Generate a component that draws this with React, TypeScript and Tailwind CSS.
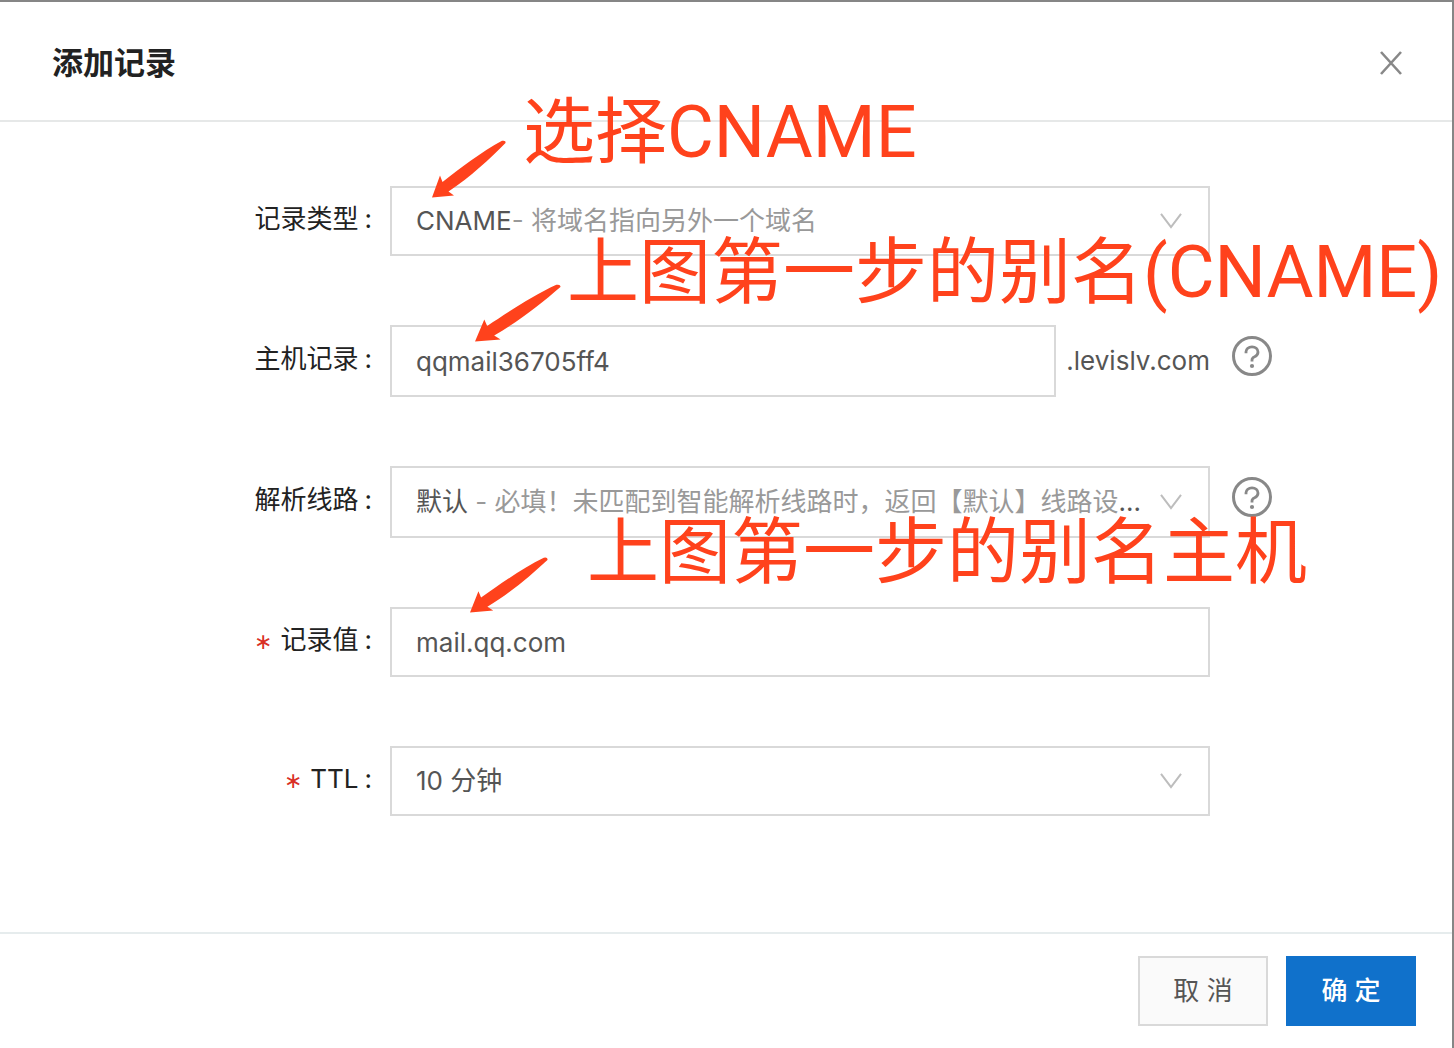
import type { ReactNode } from "react";
import { useState } from "react";

type SelectOption = { value: string; name: string; detail?: string; clipped?: boolean };

function Chevron() {
  return (
    <svg
      className="pointer-events-none h-4 w-6 shrink-0"
      viewBox="0 0 24 16"
      fill="none"
      stroke="#bdbdbd"
      strokeWidth="2"
      aria-hidden="true"
    >
      <path d="M2 0.8 12 14.2 22 0.8" />
    </svg>
  );
}

function SelectBox({ id, options }: { id: string; options: SelectOption[] }) {
  const [value, setValue] = useState(options[0].value);
  const current = options.find((o) => o.value === value) ?? options[0];
  return (
    <div className="relative flex h-full w-full items-center justify-between border-2 border-[#d9d9d9] bg-white pr-[25px] pl-6">
      <div className="overflow-hidden whitespace-nowrap text-[#555555]" aria-hidden="true">
        {current.name}
        {current.detail && <span className="text-[#999999]">{current.detail}</span>}
        {current.clipped && "..."}
      </div>
      <Chevron />
      <select
        id={id}
        value={value}
        onChange={(e) => setValue(e.target.value)}
        className="absolute inset-0 h-full w-full cursor-pointer opacity-0"
      >
        {options.map((o) => (
          <option key={o.value} value={o.value}>
            {o.name}
          </option>
        ))}
      </select>
    </div>
  );
}

function HelpButton() {
  return (
    <button type="button" aria-label="帮助" className="mb-[10px] ml-[22px] size-10 cursor-pointer">
      <svg viewBox="0 0 40 40" fill="none" stroke="#888888" aria-hidden="true">
        <circle cx="20" cy="20" r="18.5" strokeWidth="3" />
        <path
          d="M14 17.2v-1.4c0-2.8 2.6-5 6-5s6 2.2 6 5.2c0 2.2-1.3 3.8-3.4 4.7-1.8.8-2.6 1.6-2.6 3.2v1.6"
          strokeWidth="2.8"
        />
        <circle cx="20" cy="30" r="2.1" fill="#888888" stroke="none" />
      </svg>
    </button>
  );
}

function Arrow({ className }: { className: string }) {
  return (
    <svg className={className} viewBox="0 0 74 58" preserveAspectRatio="none" fill="#ff421c" aria-hidden="true">
      <path d="M0 57.5 8 35.5 10.5 42C28 28.5 50 11.5 70 0.8Q74 0 73.5 3C57 19.5 39 36.5 16.5 51.5L22 55.5Z" />
    </svg>
  );
}

type RowProps = {
  id: string;
  label: string;
  required?: boolean;
  tall?: boolean;
  help?: boolean;
  children: ReactNode;
};

function Row({ id, label, required, tall, help, children }: RowProps) {
  return (
    <div className="grid grid-cols-[390fr_820fr_242fr] items-center">
      <label htmlFor={id} className="flex items-center justify-end pr-[18px] pb-1 whitespace-nowrap text-[#222222]">
        {required && (
          <span className="mr-2 pt-1 font-['Liberation_Sans'] text-[22px] text-[#d93026]" aria-hidden="true">
            ∗
          </span>
        )}
        {label}
        <span className="ml-[6px]">:</span>
      </label>
      <div className={tall ? "relative h-[72px]" : "relative h-[70px]"}>{children}</div>
      <div className="flex items-center">{help && <HelpButton />}</div>
    </div>
  );
}

const note =
  "pointer-events-none absolute z-10 whitespace-nowrap font-[Roboto,'Noto_Sans_CJK_SC',sans-serif] text-[72px] leading-[72px] text-[#ff421c]";

export default function App() {
  return (
    <div className="flex min-h-screen flex-col overflow-hidden border-t-2 border-r-2 border-[#868686] bg-white font-[Inter,'Noto_Sans_CJK_SC',sans-serif] text-[26px] leading-9">
      <header className="flex h-[120px] items-center justify-between border-b-2 border-[#e6e8e8] pt-1 pr-[49px] pl-[52px]">
        <h1 className="text-[31px] font-bold text-[#222222]">添加记录</h1>
        <button type="button" aria-label="关闭" className="cursor-pointer">
          <svg className="size-6" viewBox="0 0 24 24" fill="none" stroke="#888888" strokeWidth="2.6" aria-hidden="true">
            <path d="M2 1 22 23M22 1 2 23" />
          </svg>
        </button>
      </header>

      <form className="flex flex-1 flex-col gap-[69px] pt-16">
        <Row id="type" label="记录类型">
          <SelectBox
            id="type"
            options={[
              { value: "cname", name: "CNAME", detail: "- 将域名指向另外一个域名" },
              { value: "a", name: "A", detail: "- 将域名指向一个IPV4地址" },
            ]}
          />
          <Arrow className="pointer-events-none absolute -top-[46px] left-[42px] z-10 h-[58px] w-[74px]" />
          <p className={`${note} -top-[89px] left-[133px]`}>选择CNAME</p>
        </Row>

        <Row id="host" label="主机记录" tall help>
          <div className="flex h-full items-center gap-[10px]">
            <input
              id="host"
              type="text"
              defaultValue="qqmail36705ff4"
              className="h-full min-w-0 flex-1 border-2 border-[#d9d9d9] px-6 text-[#555555] outline-none"
            />
            <span className="text-[#555555]">.levislv.com</span>
          </div>
          <Arrow className="pointer-events-none absolute -top-[41px] left-[85px] z-10 h-[58px] w-[86px]" />
          <p className={`${note} -top-[88px] left-[177px]`}>上图第一步的别名(CNAME)</p>
        </Row>

        <Row id="line" label="解析线路" tall help>
          <SelectBox
            id="line"
            options={[
              {
                value: "default",
                name: "默认",
                detail: " - 必填！未匹配到智能解析线路时，返回【默认】线路设",
                clipped: true,
              },
              { value: "telecom", name: "中国电信" },
            ]}
          />
        </Row>

        <Row id="value" label="记录值" required>
          <input
            id="value"
            type="text"
            defaultValue="mail.qq.com"
            className="h-full w-full border-2 border-[#d9d9d9] px-6 text-[#555555] outline-none"
          />
          <Arrow className="pointer-events-none absolute -top-[50px] left-[80px] z-10 h-[56px] w-[78px]" />
          <p className={`${note} -top-[90px] left-[197px]`}>上图第一步的别名主机</p>
        </Row>

        <Row id="ttl" label="TTL" required>
          <SelectBox
            id="ttl"
            options={[
              { value: "10", name: "10 分钟" },
              { value: "30", name: "30 分钟" },
            ]}
          />
        </Row>
      </form>

      <footer className="flex justify-end gap-[18px] border-t-2 border-[#e6eced] py-[22px] pr-9">
        <button
          type="button"
          className="h-[70px] w-[130px] cursor-pointer border-2 border-[#d9d9d9] bg-[#fafafa] text-[#555555]"
        >
          取 消
        </button>
        <button type="submit" className="h-[70px] w-[130px] cursor-pointer bg-[#1071cb] font-medium text-white">
          确 定
        </button>
      </footer>
    </div>
  );
}
